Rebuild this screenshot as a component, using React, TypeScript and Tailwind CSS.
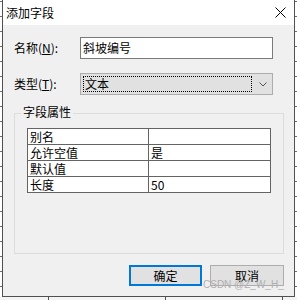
import React from 'react';

const font = { fontFamily: '"Noto Sans CJK SC", "Noto Sans", sans-serif' };

const rows: [string, string][] = [
  ['别名', ''],
  ['允许空值', '是'],
  ['默认值', ''],
  ['长度', '50'],
];

const Strip: React.FC = () => (
  <div className="w-[2px] h-[297px] bg-[repeating-linear-gradient(to_bottom,transparent_0px,transparent_1px,#6e6e6e_1px,#6e6e6e_2px,transparent_2px,transparent_15px)] bg-white" />
);

const App: React.FC = () => {
  return (
    <div className="w-[297px] h-[300px] bg-white overflow-hidden relative text-[12px] text-black" style={font}>
      <div className="flex">
        <Strip />
        {/* dialog window */}
        <div className="w-[293px] h-[297px] border-l border-r border-b border-[#505050] flex flex-col">
          <div className="h-[25px] bg-white flex items-center justify-between pl-[3px] pr-[8px]">
            <span className="leading-none">添加字段</span>
            <svg width="11" height="11" viewBox="0 0 11 11">
              <path d="M0.5 0.5 L10.5 10.5 M10.5 0.5 L0.5 10.5" stroke="#000" strokeWidth="1" />
            </svg>
          </div>

          <div className="flex-1 bg-[#f0f0f0] pl-[11px] pt-[12px]">
            <div className="flex items-center h-[22px]">
              <span className="w-[66px] leading-none">名称(<u>N</u>):</span>
              <div className="w-[193px] h-[22px] bg-white border border-[#7a7a7a] flex items-center pl-[2px] leading-none">
                斜坡编号
              </div>
            </div>

            <div className="flex items-center h-[22px] mt-[14px]">
              <span className="w-[66px] leading-none">类型(<u>T</u>):</span>
              <div className="w-[193px] h-[22px] bg-[#e1e1e1] border border-[#adadad] flex items-center pl-[2px]">
                <div className="w-[169px] h-[16px] border border-dotted border-black flex items-center pl-[1px] leading-none">
                  文本
                </div>
                <div className="flex-1 flex justify-center pl-[1px]">
                  <svg width="8" height="5" viewBox="0 0 8 5">
                    <path d="M0.5 0.5 L4 4 L7.5 0.5" stroke="#555" strokeWidth="1" fill="none" />
                  </svg>
                </div>
              </div>
            </div>

            {/* group box */}
            <div className="relative w-[270px] h-[141px] mt-[18px] border border-[#dcdcdc]">
              <span className="absolute -top-[8px] left-[6px] px-[2px] bg-[#f0f0f0] leading-none">字段属性</span>
              <div className="ml-[12px] mt-[14px] w-[244px] border-l border-t border-[#646464] grid grid-cols-[121px_122px]">
                {rows.map(([k, v]) => (
                  <React.Fragment key={k}>
                    <div className="h-[16px] bg-white border-r border-b border-[#646464] pl-[2px] flex items-center leading-none">{k}</div>
                    <div className="h-[16px] bg-white border-r border-b border-[#646464] pl-[2px] flex items-center leading-none">{v}</div>
                  </React.Fragment>
                ))}
              </div>
            </div>

            <div className="flex justify-end gap-[8px] pr-[10px] mt-[11px]">
              <button className="w-[73px] h-[21px] bg-[#e1e1e1] border-2 border-[#0078d7] leading-none">确定</button>
              <button className="w-[74px] h-[21px] bg-[#e1e1e1] border border-[#adadad] leading-none">取消</button>
            </div>
          </div>
        </div>
        <Strip />
      </div>
      <div className="h-[3px] flex bg-[#f4f4f4]">
        <div className="w-[48px]" />
        <div className="w-[1px] bg-[#505050]" />
        <div className="w-[116px]" />
        <div className="w-[1px] bg-[#505050]" />
        <div className="w-[116px]" />
        <div className="w-[1px] bg-[#505050]" />
      </div>

      {/* watermark */}
      <span
        className="absolute left-[203px] top-[280px] text-[10px] leading-none text-[#b0b0b0]"
        style={{ fontFamily: '"Liberation Sans", Arial, sans-serif' }}
      >
        CSDN @Z_W_H_
      </span>
    </div>
  );
};

export default App;
